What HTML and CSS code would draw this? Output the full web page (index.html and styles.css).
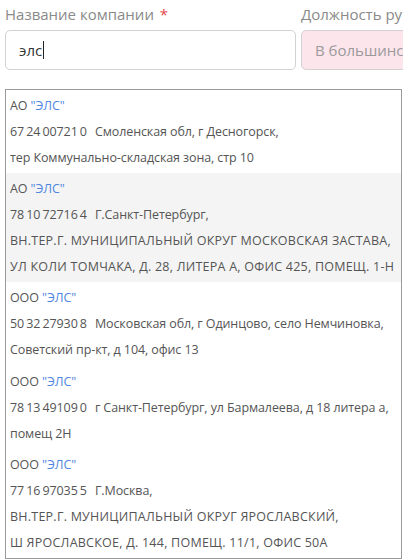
FILE: index.html
```html
<!DOCTYPE html>
<html lang="ru">
<head>
  <meta charset="UTF-8">
  <meta name="viewport" content="width=device-width, initial-scale=1.0">
  <title>Компания</title>
  <link rel="stylesheet" href="styles.css">
</head>
<body>
  <div class="page">
    <div class="form-row">
      <div class="form-group">
        <label for="company">Название компании <span class="req">*</span></label>
        <div class="form-control"><span class="value">элс</span><span class="caret"></span></div>
      </div>
      <div class="form-group">
        <label for="position">Должность ру</label>
        <div class="form-control placeholder-box">В большинс</div>
      </div>
    </div>

    <div class="suggestions">
      <div class="suggestion">
        <div class="line">АО <span class="hl">"ЭЛС"</span></div>
        <div class="line"><span class="inn">67 24 00721 0</span>Смоленская обл, г Десногорск,</div>
        <div class="line">тер Коммунально-складская зона, стр 10</div>
      </div>
      <div class="suggestion active">
        <div class="line">АО <span class="hl">"ЭЛС"</span></div>
        <div class="line"><span class="inn">78 10 72716 4</span>Г.Санкт-Петербург,</div>
        <div class="line upper">ВН.ТЕР.Г. МУНИЦИПАЛЬНЫЙ ОКРУГ МОСКОВСКАЯ ЗАСТАВА,</div>
        <div class="line upper">УЛ КОЛИ ТОМЧАКА, Д. 28, ЛИТЕРА А, ОФИС 425, ПОМЕЩ. 1-Н</div>
      </div>
      <div class="suggestion">
        <div class="line">ООО <span class="hl">"ЭЛС"</span></div>
        <div class="line"><span class="inn">50 32 27930 8</span>Московская обл, г Одинцово, село Немчиновка,</div>
        <div class="line">Советский пр-кт, д 104, офис 13</div>
      </div>
      <div class="suggestion">
        <div class="line">ООО <span class="hl">"ЭЛС"</span></div>
        <div class="line"><span class="inn">78 13 49109 0</span>г Санкт-Петербург, ул Бармалеева, д 18 литера а,</div>
        <div class="line">помещ 2Н</div>
      </div>
      <div class="suggestion">
        <div class="line">ООО <span class="hl">"ЭЛС"</span></div>
        <div class="line"><span class="inn">77 16 97035 5</span>Г.Москва,</div>
        <div class="line upper">ВН.ТЕР.Г. МУНИЦИПАЛЬНЫЙ ОКРУГ ЯРОСЛАВСКИЙ,</div>
        <div class="line upper">Ш ЯРОСЛАВСКОЕ, Д. 144, ПОМЕЩ. 11/1, ОФИС 50А</div>
      </div>
    </div>
    <div class="next-field"></div>
  </div>
</body>
</html>
```

FILE: styles.css
```css
body {
  margin: 0;
  font-family: "Open Sans", "Noto Sans", sans-serif;
  color: #555;
  background: #fff;
  overflow: hidden;
}
.page {
  width: 398px;
  padding-left: 5px;
  overflow: hidden;
}
.form-row {
  display: grid;
  grid-template-columns: 291px 291px;
  column-gap: 5px;
}
.form-group label {
  display: block;
  font-size: 15px;
  line-height: 20px;
  color: #8a8a8a;
  margin-top: 4px;
  margin-bottom: 6px;
  white-space: nowrap;
}
.req {
  color: #e5484d;
  margin-left: 2px;
}
.form-control {
  box-sizing: border-box;
  height: 40px;
  border: 1px solid #d2d2d2;
  border-radius: 5px;
  padding: 0 13px;
  display: flex;
  align-items: center;
  font-size: 15px;
  color: #333;
  background: #fff;
  white-space: nowrap;
}
.caret {
  display: inline-block;
  width: 1px;
  height: 18px;
  background: #222;
  margin-left: 1px;
}
.placeholder-box {
  background: #fde5ec;
  color: #9a9a9a;
}
.suggestions {
  margin-top: 19px;
  width: 397px;
  box-sizing: border-box;
  border: 1px solid #9a9a9a;
  font-size: 12.5px;
  letter-spacing: -0.1px;
}
.suggestion {
  padding: 3px 4px 2.2px;
}
.suggestion.active {
  background: #f4f4f4;
}
.line {
  line-height: 26px;
  white-space: nowrap;
  overflow: hidden;
}
.line.upper {
  letter-spacing: 0.24px;
}
.hl {
  color: #4f86e0;
}
.inn {
  word-spacing: -1px;
  margin-right: 8px;
}
.next-field {
  margin-top: 3px;
  margin-left: 2px;
  height: 10px;
  border-top: 1px solid #cfcfcf;
  border-left: 1px solid #cfcfcf;
}
```
